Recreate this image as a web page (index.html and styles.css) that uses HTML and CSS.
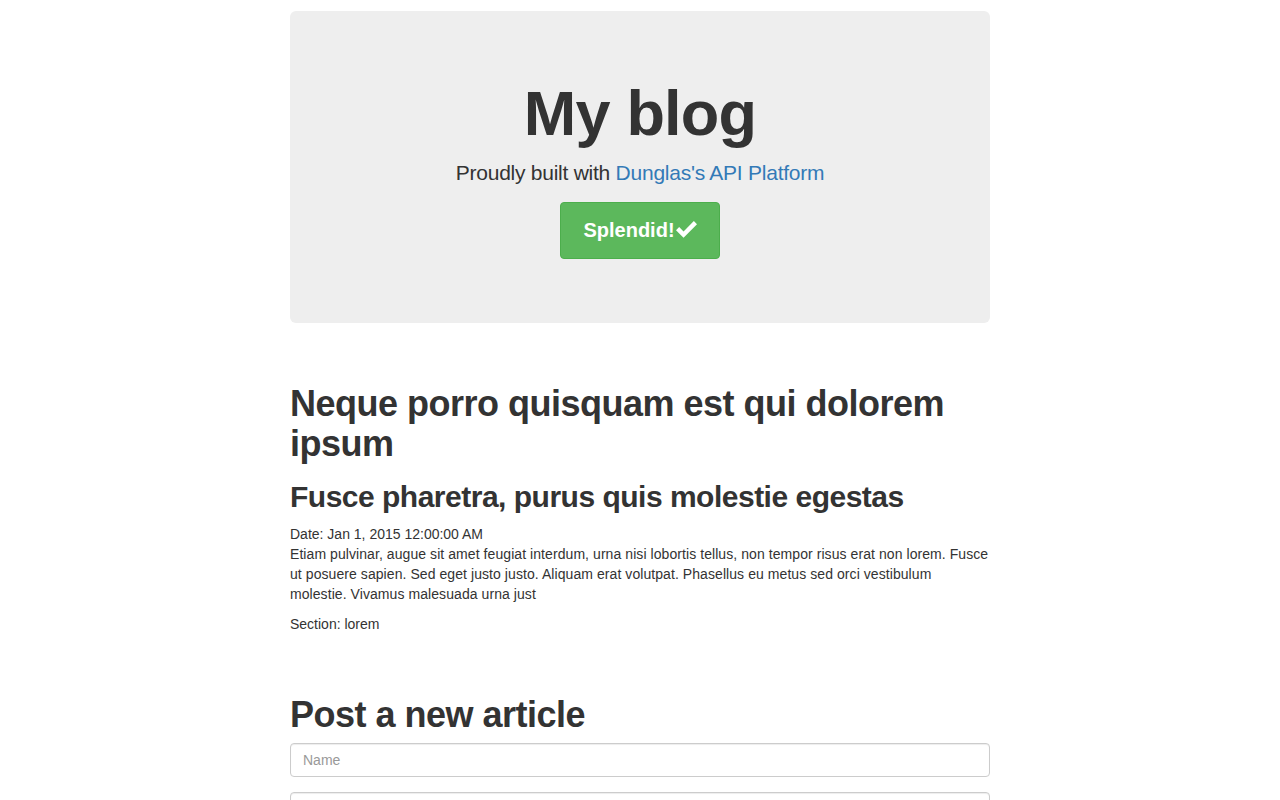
FILE: index.html
```html
<!DOCTYPE html>
<html>
<head>
<meta charset="utf-8">
<title>My blog</title>
<link rel="stylesheet" href="styles.css">
</head>
<body>
<div class="container">
  <div class="jumbotron">
    <h1 class="jumbo-title">My blog</h1>
    <p class="lead">Proudly built with <a href="#">Dunglas's API Platform</a></p>
    <div class="btn-row">
      <a class="btn-success" href="#">Splendid!<svg class="ok" viewBox="0 0 20 16" width="21" height="17"><path d="M0 8.6 L3 5.6 L7.2 9.8 L17 0 L20 3 L7.2 15.8 Z" fill="#fff"/></svg></a>
    </div>
  </div>

  <article class="post">
    <h1 class="post-title">Neque porro quisquam est qui dolorem ipsum</h1>
    <h2 class="post-headline">Fusce pharetra, purus quis molestie egestas</h2>
    <div class="post-date">Date: Jan 1, 2015 12:00:00 AM</div>
    <p class="post-body">Etiam pulvinar, augue sit amet feugiat interdum, urna nisi lobortis tellus, non tempor risus erat non lorem. Fusce ut posuere sapien. Sed eget justo justo. Aliquam erat volutpat. Phasellus eu metus sed orci vestibulum molestie. Vivamus malesuada urna just</p>
    <p class="post-section">Section: lorem</p>
  </article>

  <section class="new-article">
    <h1 class="post-title">Post a new article</h1>
    <div class="form-group"><input class="form-control" type="text" placeholder="Name"></div>
    <div class="form-group"><input class="form-control" type="text" placeholder="Headline"></div>
  </section>
</div>
</body>
</html>
```
FILE: styles.css
```css
html, body {
  margin: 0;
  padding: 0;
  background: #fff;
}
body {
  font-family: "Liberation Sans", Arial, Helvetica, sans-serif;
  font-size: 14px;
  line-height: 1.42857143;
  color: #333;
}
.container {
  width: 700px;
  margin: 0 auto;
  padding-top: 11px;
}
.jumbotron {
  background: #eee;
  border-radius: 6px;
  padding: 48px 60px;
  text-align: center;
  margin-bottom: 30px;
}
.jumbo-title {
  font-size: 63px;
  line-height: 1.1;
  font-weight: 700;
  letter-spacing: -0.8px;
  margin: 20px 0 10px;
}
.lead {
  font-size: 21px;
  font-weight: 300;
  line-height: 30px;
  letter-spacing: -0.25px;
  margin: 0 0 14px;
}
.lead a {
  color: #337ab7;
  text-decoration: none;
}
.btn-row {
  margin: 0 0 16px;
  height: 57px;
}
.btn-success {
  display: inline-flex;
  align-items: center;
  justify-content: center;
  box-sizing: border-box;
  width: 160px;
  height: 57px;
  background: #5cb85c;
  border: 1px solid #4cae4c;
  border-radius: 4px;
  color: #fff;
  font-size: 20px;
  font-weight: 700;
  text-decoration: none;
  padding-bottom: 1px;
}
.ok {
  margin-left: 1px;
  margin-top: -2px;
}
.post {
  padding-top: 31px;
}
.post-title {
  font-size: 36px;
  line-height: 1.1;
  font-weight: 700;
  letter-spacing: -0.5px;
  margin: 0;
}
.post-headline {
  font-size: 30px;
  line-height: 1.1;
  font-weight: 700;
  letter-spacing: -0.5px;
  margin: 17px 0 11px;
}
.post-date {
  font-size: 14px;
  line-height: 20px;
}
.post-body {
  margin: 0 0 10px;
  letter-spacing: 0.07px;
}
.post-section {
  margin: 0 0 10px;
}
.new-article {
  padding-top: 51px;
}
.new-article .post-title {
  margin: 0 0 8px;
}
.form-group {
  margin-bottom: 15px;
}
.form-control {
  display: block;
  box-sizing: border-box;
  width: 100%;
  height: 34px;
  padding: 6px 12px;
  font-family: "Liberation Sans", Arial, Helvetica, sans-serif;
  font-size: 14px;
  line-height: 1.42857143;
  color: #555;
  background: #fff;
  border: 1px solid #ccc;
  border-radius: 4px;
  box-shadow: inset 0 1px 1px rgba(0,0,0,.075);
  margin: 0;
}
.form-control::placeholder {
  color: #999;
}
```
